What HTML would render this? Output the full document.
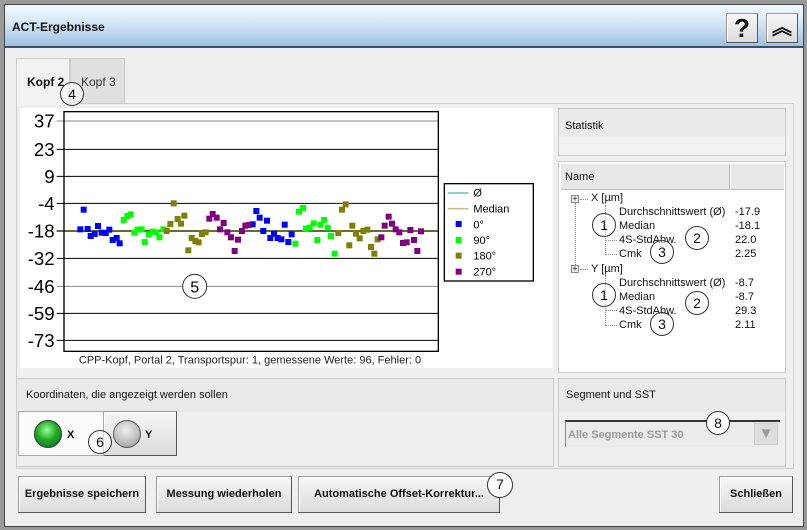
<!DOCTYPE html>
<html><head><meta charset="utf-8"><style>
*{box-sizing:border-box;margin:0;padding:0}
body{width:807px;height:530px;background:#9a9a9a;font-family:"Liberation Sans","DejaVu Sans",sans-serif;font-size:11px;color:#111;position:relative;overflow:hidden}
.a{position:absolute}
.win{left:4px;top:4px;width:800px;height:523px;background:#eeeff1;border:1px solid #444}
.title{left:5px;top:5px;width:798px;height:43px;background:linear-gradient(#f4fbff,#d7e9f7 40%,#9fc2e2);border-bottom:2px solid #3c5168}
.btn{background:linear-gradient(#f6f6f6,#dcdcdc);border:1px solid #999;border-right-color:#555;border-bottom-color:#555;box-shadow:inset 1px 1px 0 #fff;text-align:center;font-weight:bold;font-size:11px}
.circ{border:1px solid #333;border-radius:50%;background:rgba(255,255,255,.5);text-align:center;font-size:14px;width:24px;height:24px;line-height:22px}
.panel{border:1px solid #ccc;background:#eeeff1}
.st{position:absolute;font-size:11px;white-space:nowrap}
.dv{position:absolute;border-left:1px dotted #888}
.dh{position:absolute;border-top:1px dotted #888}
</style></head><body>
<div class="a win"></div>
<div class="a title"></div>
<div class="a" style="left:12px;top:20px;font-weight:bold;font-size:12px">ACT-Ergebnisse</div>
<div class="a btn" style="left:726px;top:13px;width:32px;height:30px;font-size:26px;line-height:28px">?</div>
<div class="a btn" style="left:766px;top:13px;width:32px;height:30px;font-size:20px;line-height:28px">︽</div>

<div class="a" style="left:16px;top:103px;width:778px;height:366px;border:1px solid #cfcfcf;background:#eeeff1"></div>
<div class="a" style="left:70px;top:58px;width:55px;height:46px;background:#e0e0e0;border:1px solid #ccc"></div>
<div class="a" style="left:16px;top:58px;width:54px;height:47px;background:#f2f2f4;border:1px solid #ccc;border-bottom:none"></div>
<div class="a" style="left:27px;top:75px;font-weight:bold;font-size:12px">Kopf 2</div>
<div class="a" style="left:81px;top:75px;font-size:12px;color:#333">Kopf 3</div>
<div class="a circ" style="left:60px;top:82px">4</div>

<div class="a" style="left:20px;top:108px;width:533px;height:260px;background:#fff"></div>
<svg class="a" style="left:20px;top:105px" width="540" height="265" viewBox="0 0 1620 795">
<g stroke="#000" stroke-width="3">
<line x1="110" y1="48" x2="1255" y2="48" stroke="#888"/>
<line x1="110" y1="133" x2="1255" y2="133"/>
<line x1="110" y1="214" x2="1255" y2="214"/>
<line x1="110" y1="295" x2="1255" y2="295"/>
<line x1="110" y1="460" x2="1255" y2="460"/>
<line x1="110" y1="544" x2="1255" y2="544" stroke="#888"/>
<line x1="110" y1="625" x2="1255" y2="625"/>
<line x1="110" y1="706" x2="1255" y2="706"/>
<line x1="110" y1="378" x2="1255" y2="378" stroke="#4a5a10" stroke-width="5"/>
<rect x="132" y="20" width="1123" height="719" fill="none" stroke-width="4"/>
</g>
<g font-size="56" text-anchor="end" font-family="Liberation Sans,sans-serif">
<text x="104" y="68">37</text><text x="104" y="153">23</text><text x="104" y="234">9</text><text x="104" y="315">-4</text><text x="104" y="398">-18</text><text x="104" y="480">-32</text><text x="104" y="564">-46</text><text x="104" y="645">-59</text><text x="104" y="726">-73</text>
</g>
<g fill="#0000ff">
<rect x="172" y="364" width="18" height="18"/><rect x="182" y="305" width="18" height="18"/><rect x="194" y="363" width="18" height="18"/><rect x="203" y="384" width="18" height="18"/><rect x="215" y="378" width="18" height="18"/><rect x="225" y="354" width="18" height="18"/><rect x="236" y="374" width="18" height="18"/><rect x="248" y="375" width="18" height="18"/><rect x="259" y="365" width="18" height="18"/><rect x="269" y="396" width="18" height="18"/><rect x="281" y="390" width="18" height="18"/><rect x="290" y="406" width="18" height="18"/>
<rect x="689" y="349" width="18" height="18"/><rect x="700" y="309" width="18" height="18"/><rect x="710" y="329" width="18" height="18"/><rect x="721" y="369" width="18" height="18"/><rect x="732" y="338" width="18" height="18"/><rect x="742" y="390" width="18" height="18"/><rect x="753" y="377" width="18" height="18"/><rect x="764" y="390" width="18" height="18"/><rect x="775" y="394" width="18" height="18"/><rect x="785" y="350" width="18" height="18"/><rect x="796" y="402" width="18" height="18"/><rect x="806" y="379" width="18" height="18"/>
</g>
<g fill="#00ff00">
<rect x="302" y="336" width="18" height="18"/><rect x="313" y="324" width="18" height="18"/><rect x="323" y="319" width="18" height="18"/><rect x="334" y="374" width="18" height="18"/><rect x="344" y="365" width="18" height="18"/><rect x="356" y="364" width="18" height="18"/><rect x="365" y="402" width="18" height="18"/><rect x="377" y="379" width="18" height="18"/><rect x="388" y="371" width="18" height="18"/><rect x="399" y="373" width="18" height="18"/><rect x="409" y="388" width="18" height="18"/><rect x="421" y="364" width="18" height="18"/>
<rect x="817" y="407" width="18" height="18"/><rect x="828" y="311" width="18" height="18"/><rect x="840" y="300" width="18" height="18"/><rect x="849" y="362" width="18" height="18"/><rect x="860" y="359" width="18" height="18"/><rect x="872" y="346" width="18" height="18"/><rect x="883" y="396" width="18" height="18"/><rect x="892" y="350" width="18" height="18"/><rect x="903" y="336" width="18" height="18"/><rect x="914" y="359" width="18" height="18"/><rect x="924" y="384" width="18" height="18"/><rect x="935" y="437" width="18" height="18"/>
</g>
<g fill="#808000">
<rect x="431" y="369" width="18" height="18"/><rect x="442" y="348" width="18" height="18"/><rect x="452" y="286" width="18" height="18"/><rect x="464" y="333" width="18" height="18"/><rect x="474" y="347" width="18" height="18"/><rect x="484" y="323" width="18" height="18"/><rect x="496" y="427" width="18" height="18"/><rect x="506" y="390" width="18" height="18"/><rect x="517" y="399" width="18" height="18"/><rect x="527" y="403" width="18" height="18"/><rect x="537" y="378" width="18" height="18"/><rect x="548" y="373" width="18" height="18"/>
<rect x="946" y="375" width="18" height="18"/><rect x="957" y="305" width="18" height="18"/><rect x="968" y="289" width="18" height="18"/><rect x="979" y="412" width="18" height="18"/><rect x="988" y="353" width="18" height="18"/><rect x="999" y="377" width="18" height="18"/><rect x="1010" y="391" width="18" height="18"/><rect x="1021" y="369" width="18" height="18"/><rect x="1033" y="365" width="18" height="18"/><rect x="1044" y="417" width="18" height="18"/><rect x="1054" y="437" width="18" height="18"/><rect x="1064" y="394" width="18" height="18"/>
</g>
<g fill="#800080">
<rect x="559" y="332" width="18" height="18"/><rect x="569" y="318" width="18" height="18"/><rect x="581" y="329" width="18" height="18"/><rect x="591" y="364" width="18" height="18"/><rect x="602" y="345" width="18" height="18"/><rect x="613" y="373" width="18" height="18"/><rect x="624" y="388" width="18" height="18"/><rect x="635" y="429" width="18" height="18"/><rect x="645" y="395" width="18" height="18"/><rect x="657" y="369" width="18" height="18"/><rect x="667" y="353" width="18" height="18"/><rect x="677" y="351" width="18" height="18"/>
<rect x="1075" y="388" width="18" height="18"/><rect x="1085" y="353" width="18" height="18"/><rect x="1097" y="326" width="18" height="18"/><rect x="1107" y="347" width="18" height="18"/><rect x="1118" y="364" width="18" height="18"/><rect x="1129" y="373" width="18" height="18"/><rect x="1140" y="405" width="18" height="18"/><rect x="1151" y="403" width="18" height="18"/><rect x="1162" y="366" width="18" height="18"/><rect x="1173" y="396" width="18" height="18"/><rect x="1183" y="429" width="18" height="18"/><rect x="1194" y="370" width="18" height="18"/>
</g>
<rect x="1273" y="236" width="267" height="292" fill="#fff" stroke="#000" stroke-width="4"/>
<line x1="1283" y1="264" x2="1345" y2="264" stroke="#7fc7cc" stroke-width="5"/>
<line x1="1283" y1="311" x2="1345" y2="311" stroke="#c8c090" stroke-width="5"/>
<rect x="1307" y="348" width="18" height="18" fill="#00f"/><rect x="1307" y="396" width="18" height="18" fill="#0f0"/><rect x="1307" y="443" width="18" height="18" fill="#808000"/><rect x="1307" y="491" width="18" height="18" fill="#800080"/>
<g font-size="33" font-family="Liberation Sans,sans-serif"><text x="1360" y="275">Ø</text><text x="1360" y="322">Median</text><text x="1360" y="370">0°</text><text x="1360" y="417">90°</text><text x="1360" y="464">180°</text><text x="1360" y="512">270°</text></g>
<text x="690" y="776" font-size="33" text-anchor="middle" fill="#222" font-family="Liberation Sans,sans-serif">CPP-Kopf, Portal 2, Transportspur: 1, gemessene Werte: 96, Fehler: 0</text>
<circle cx="524" cy="544" r="36" fill="#fff" stroke="#333" stroke-width="3"/>
<text x="524" y="562" font-size="48" text-anchor="middle" font-family="Liberation Sans,sans-serif">5</text>
</svg>

<!-- stats -->
<div class="a panel" style="left:558px;top:108px;width:228px;height:48px;background:linear-gradient(#eaeaea,#eaeaea 60%,#f2f2f2 60%)"></div>
<div class="a" style="left:565px;top:120px">Statistik</div>
<div class="a" style="left:558px;top:161px;width:228px;height:212px;background:#fff;border:1px solid #ccc"></div>
<div class="a" style="left:561px;top:164px;width:169px;height:26px;background:#e8e8e8;border-right:1px solid #bbb;border-bottom:1px solid #bbb"></div>
<div class="a" style="left:731px;top:164px;width:53px;height:26px;background:#e8e8e8;border-bottom:1px solid #bbb"></div>
<div class="a" style="left:565px;top:171px">Name</div>

<div class="dv" style="left:575px;top:203px;height:66px"></div>
<div class="dv" style="left:605px;top:205px;height:50px"></div>
<div class="dh" style="left:580px;top:199px;width:8px"></div>
<div class="dh" style="left:580px;top:269px;width:8px"></div>
<div class="dh" style="left:605px;top:240px;width:12px"></div>
<div class="dh" style="left:605px;top:254px;width:12px"></div>
<div class="dv" style="left:605px;top:275px;height:50px"></div>
<div class="dh" style="left:605px;top:310px;width:12px"></div>
<div class="dh" style="left:605px;top:325px;width:12px"></div>
<div class="a" style="left:571px;top:195px;width:8px;height:8px;border:1px solid #888;background:#eee;font-size:8px;line-height:6px;text-align:center">+</div>
<div class="a" style="left:571px;top:265px;width:8px;height:8px;border:1px solid #888;background:#eee;font-size:8px;line-height:6px;text-align:center">+</div>

<div class="st" style="left:591px;top:192px">X [µm]</div>
<div class="st" style="left:619px;top:206px">Durchschnittswert (Ø)</div><div class="st" style="left:735px;top:206px">-17.9</div>
<div class="st" style="left:619px;top:220px">Median</div><div class="st" style="left:735px;top:220px">-18.1</div>
<div class="st" style="left:619px;top:234px">4S-StdAbw.</div><div class="st" style="left:735px;top:234px">22.0</div>
<div class="st" style="left:619px;top:248px">Cmk</div><div class="st" style="left:735px;top:248px">2.25</div>
<div class="st" style="left:591px;top:263px">Y [µm]</div>
<div class="st" style="left:619px;top:277px">Durchschnittswert (Ø)</div><div class="st" style="left:735px;top:277px">-8.7</div>
<div class="st" style="left:619px;top:291px">Median</div><div class="st" style="left:735px;top:291px">-8.7</div>
<div class="st" style="left:619px;top:305px">4S-StdAbw.</div><div class="st" style="left:735px;top:305px">29.3</div>
<div class="st" style="left:619px;top:319px">Cmk</div><div class="st" style="left:735px;top:319px">2.11</div>

<div class="a circ" style="left:592px;top:213px">1</div>
<div class="a circ" style="left:685px;top:226px">2</div>
<div class="a circ" style="left:650px;top:240px">3</div>
<div class="a circ" style="left:592px;top:283px">1</div>
<div class="a circ" style="left:685px;top:291px">2</div>
<div class="a circ" style="left:650px;top:312px">3</div>

<!-- koordinaten -->
<div class="a panel" style="left:16px;top:378px;width:538px;height:89px;background:linear-gradient(#eaeaea,#eaeaea 38%,#eeeff1 38%)"></div>
<div class="a" style="left:26px;top:389px">Koordinaten, die angezeigt werden sollen</div>
<div class="a btn" style="left:103px;top:411px;width:74px;height:45px"></div>
<div class="a" style="left:18px;top:411px;width:86px;height:45px;background:#fbfbfb;border:1px solid #aaa"></div>
<div class="a" style="left:34px;top:420px;width:28px;height:28px;border-radius:50%;background:radial-gradient(circle at 45% 35%,#9f9,#2a2 45%,#063);border:1px solid #333"></div>
<div class="a" style="left:67px;top:429px;font-weight:bold">X</div>
<div class="a" style="left:113px;top:420px;width:28px;height:28px;border-radius:50%;background:radial-gradient(circle at 45% 35%,#eee,#bbb 60%,#888);border:1px solid #555"></div>
<div class="a" style="left:145px;top:429px;font-weight:bold">Y</div>
<div class="a circ" style="left:88px;top:430px">6</div>

<!-- segment -->
<div class="a panel" style="left:558px;top:378px;width:228px;height:89px;background:linear-gradient(#eaeaea,#eaeaea 38%,#eeeff1 38%)"></div>
<div class="a" style="left:566px;top:389px">Segment und SST</div>
<div class="a" style="left:565px;top:420px;width:215px;height:27px;background:#ebebeb;border-top:2px solid #333;border-left:1px solid #888"></div>
<div class="a" style="left:568px;top:429px;font-weight:bold;color:#999;font-size:11px">Alle Segmente SST 30</div>
<div class="a" style="left:754px;top:423px;width:24px;height:22px;background:#ddd;border:1px solid #ccc;color:#999;text-align:center;font-size:15px;line-height:20px">▼</div>
<div class="a circ" style="left:706px;top:411px;background:#fff">8</div>

<!-- buttons -->
<div class="a btn" style="left:18px;top:476px;width:128px;height:37px;line-height:35px">Ergebnisse speichern</div>
<div class="a btn" style="left:156px;top:476px;width:136px;height:37px;line-height:35px">Messung wiederholen</div>
<div class="a btn" style="left:298px;top:476px;width:202px;height:37px;line-height:35px">Automatische Offset-Korrektur...</div>
<div class="a circ" style="left:487px;top:472px;background:#fff;width:26px;height:26px">7</div>
<div class="a btn" style="left:719px;top:476px;width:74px;height:37px;line-height:35px">Schließen</div>
</body></html>
